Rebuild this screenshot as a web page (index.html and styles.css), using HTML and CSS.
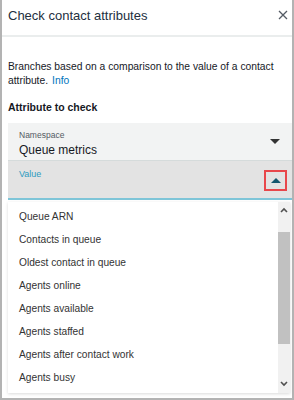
FILE: index.html
```html
<!DOCTYPE html>
<html>
<head>
<meta charset="utf-8">
<link rel="stylesheet" href="styles.css">
</head>
<body>
<div class="frame">
  <div class="header">
    <span class="title">Check contact attributes</span>
    <svg class="close" width="10" height="10" viewBox="0 0 10 10"><path d="M1 1L9 9M9 1L1 9" stroke="#545b64" stroke-width="1.3" fill="none"/></svg>
  </div>
  <div class="content">
    <p class="desc"><span>Branches based on a comparison to the value of a contact attribute.</span><a class="info">Info</a></p>
    <div class="section">Attribute to check</div>
    <div class="field ns">
      <div class="field-text">
        <div class="label">Namespace</div>
        <div class="value">Queue metrics</div>
      </div>
      <span class="caret down"></span>
    </div>
    <div class="field val">
      <div class="field-text">
        <div class="label teal">Value</div>
      </div>
      <span class="hl"><span class="caret up"></span></span>
    </div>
    <div class="list">
      <ul class="items">
        <li>Queue ARN</li>
        <li>Contacts in queue</li>
        <li>Oldest contact in queue</li>
        <li>Agents online</li>
        <li>Agents available</li>
        <li>Agents staffed</li>
        <li>Agents after contact work</li>
        <li>Agents busy</li>
      </ul>
      <div class="scrollbar">
        <svg class="arrow" width="8" height="6" viewBox="0 0 8 6"><path d="M1 5L4 2L7 5" stroke="#505050" stroke-width="1.6" fill="none"/></svg>
        <div class="track"><div class="thumb"></div></div>
        <svg class="arrow" width="8" height="6" viewBox="0 0 8 6"><path d="M1 1L4 4L7 1" stroke="#505050" stroke-width="1.6" fill="none"/></svg>
      </div>
    </div>
  </div>
</div>
</body>
</html>
```

FILE: styles.css
```css
* { box-sizing: border-box; }
html, body { margin: 0; padding: 0; background: #fff; }
body { font-family: "Liberation Sans", Arial, sans-serif; color: #16191f; }
.frame {
  width: 294px;
  height: 400px;
  border-left: 2px solid #b3b3b3;
  border-right: 2px solid #b3b3b3;
  border-bottom: 2px solid #b3b3b3;
  display: flex;
  flex-direction: column;
  overflow: hidden;
}
.header {
  height: 37px;
  flex: none;
  display: flex;
  align-items: center;
  justify-content: space-between;
  padding: 0 4px 5px 6px;
  border-bottom: 2px solid #eaeded;
}
.title { font-size: 13px; color: #232f3e; }
.content { padding: 23px 0 0 6px; flex: 1; display: flex; flex-direction: column; }
.desc { margin: 0 4px 0 0; font-size: 10.3px; line-height: 14px; color: #16191f; }
.info { color: #0073bb; margin-left: 4px; }
.section { margin-top: 13px; font-size: 10.5px; font-weight: bold; color: #16191f; }
.field {
  display: flex;
  justify-content: space-between;
  padding: 0 4px 0 11px;
}
.ns { margin-top: 10px; height: 38px; background: #f2f3f3; border-bottom: 1px solid #d5dbdb; align-items: center; }
.val { height: 39px; background: #e3e3e3; border-bottom: 2px solid #7ec5d8; align-items: flex-start; }
.field-text { display: flex; flex-direction: column; }
.ns .field-text { padding-top: 5px; }
.val .field-text { padding-top: 8px; }
.label { font-size: 8.5px; color: #545b64; line-height: 11px; }
.label.teal { color: #2e9cc0; font-size: 9px; }
.value { font-size: 12px; color: #16191f; line-height: 16px; margin-top: 1px; }
.caret { width: 0; height: 0; border-left: 5px solid transparent; border-right: 5px solid transparent; }
.caret.down { border-top: 5px solid #333; margin-right: 8px; }
.caret.up { border-bottom: 5px solid #14566e; }
.hl {
  margin-top: 9px;
  margin-right: 1px;
  width: 23px;
  height: 21px;
  border: 2px solid #e8474b;
  display: flex;
  align-items: center;
  justify-content: center;
}
.list {
  margin-top: 2px;
  height: 191px;
  display: flex;
  box-shadow: 0 1px 3px rgba(0,0,0,0.15);
  margin-right: 2px;
}
.items { list-style: none; margin: 0; padding: 3px 0 0 0; flex: 1; }
.items li { height: 23px; line-height: 23px; padding-left: 11px; font-size: 10.2px; color: #333; }
.scrollbar { width: 12px; background: #f1f1f1; display: flex; flex-direction: column; align-items: center; }
.arrow { flex: none; margin: 5px 0 6px; }
.track { flex: 1; width: 100%; }
.thumb { margin-top: 13px; height: 112px; background: #c1c1c1; width: 100%; }
```
